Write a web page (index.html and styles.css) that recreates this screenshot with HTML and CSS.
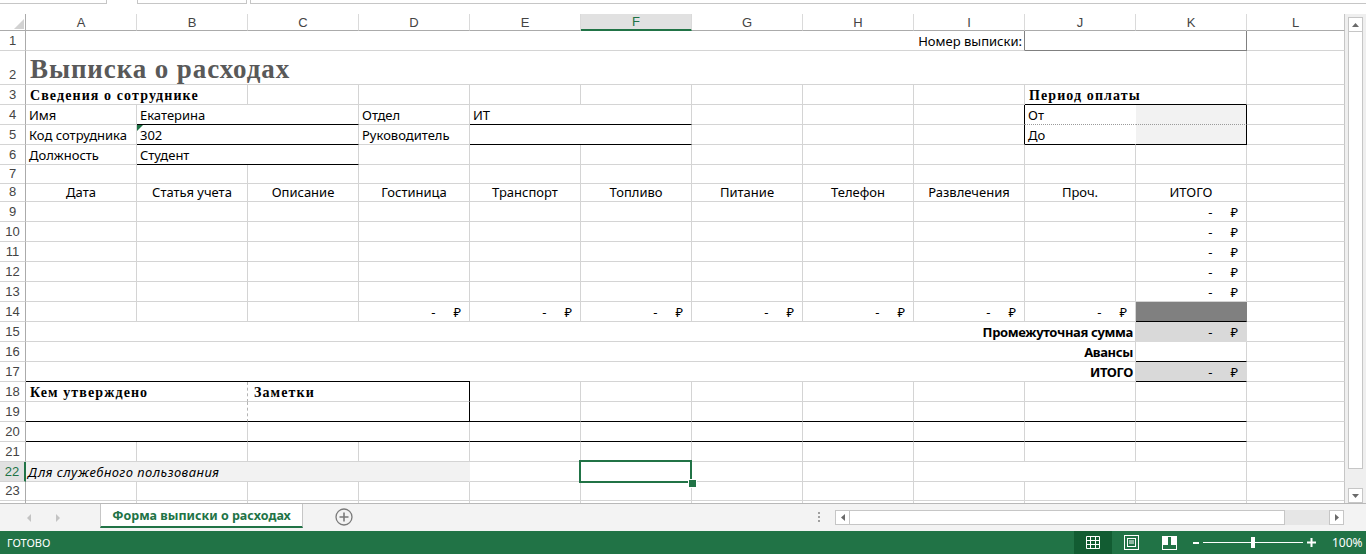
FILE: index.html
```html
<!DOCTYPE html>
<html lang="ru">
<head>
<meta charset="utf-8">
<title>Выписка о расходах</title>
<link rel="stylesheet" href="styles.css">
</head>
<body>
<div class="app">
  <div class="fbar"><div class="fb fb1"></div><div class="fb fb2"></div><div class="fb fb3"></div></div>
  <div class="main">
    <div class="sheet">
      <div class="hrow">
        <div class="corner"><svg width="10" height="10" viewBox="0 0 10 10"><path d="M10 0V10H0Z" fill="#d2d2d2"/></svg></div>
        <div class="ch">A</div><div class="ch">B</div><div class="ch">C</div><div class="ch">D</div><div class="ch">E</div><div class="ch act">F</div><div class="ch">G</div><div class="ch">H</div><div class="ch">I</div><div class="ch">J</div><div class="ch">K</div><div class="ch l">L</div>
      </div>

      <div class="row">
        <div class="rh">1</div>
        <div class="c s9 rt bxr">Номер выписки:</div>
        <div class="c s2 bxr bxb"></div>
        <div class="c l"></div>
      </div>

      <div class="row h34">
        <div class="rh">2</div>
        <div class="c s11 title">Выписка о расходах</div>
        <div class="c l"></div>
      </div>

      <div class="row">
        <div class="rh">3</div>
        <div class="c s2 hd">Сведения о сотруднике</div>
        <div class="c"></div><div class="c"></div><div class="c"></div><div class="c"></div><div class="c"></div><div class="c"></div><div class="c"></div>
        <div class="c s2 hd bb">Период оплаты</div>
        <div class="c l"></div>
      </div>

      <div class="row">
        <div class="rh">4</div>
        <div class="c">Имя</div>
        <div class="c s2 bb">Екатерина</div>
        <div class="c">Отдел</div>
        <div class="c s2 bb">ИТ</div>
        <div class="c"></div><div class="c"></div>
        <div class="c br"></div>
        <div class="c bbdot nbr">От</div>
        <div class="c f2 bbdot br"></div>
        <div class="c l"></div>
      </div>

      <div class="row">
        <div class="rh">5</div>
        <div class="c">Код сотрудника</div>
        <div class="c s2 bb pr"><span class="err"></span>302</div>
        <div class="c">Руководитель</div>
        <div class="c s2 bb"></div>
        <div class="c"></div><div class="c"></div>
        <div class="c br"></div>
        <div class="c bb nbr">До</div>
        <div class="c f2 bb br"></div>
        <div class="c l"></div>
      </div>

      <div class="row">
        <div class="rh">6</div>
        <div class="c">Должность</div>
        <div class="c s2 bb">Студент</div>
        <div class="c"></div><div class="c"></div><div class="c"></div><div class="c"></div><div class="c"></div><div class="c"></div><div class="c"></div><div class="c"></div>
        <div class="c l"></div>
      </div>

      <div class="row h17">
        <div class="rh">7</div>
        <div class="c"></div><div class="c"></div><div class="c"></div><div class="c"></div><div class="c"></div><div class="c"></div><div class="c"></div><div class="c"></div><div class="c"></div><div class="c"></div><div class="c"></div>
        <div class="c l"></div>
      </div>

      <div class="row">
        <div class="rh">8</div>
        <div class="c ctr">Дата</div>
        <div class="c ctr">Статья учета</div>
        <div class="c ctr">Описание</div>
        <div class="c ctr">Гостиница</div>
        <div class="c ctr">Транспорт</div>
        <div class="c ctr">Топливо</div>
        <div class="c ctr">Питание</div>
        <div class="c ctr">Телефон</div>
        <div class="c ctr">Развлечения</div>
        <div class="c ctr">Проч.</div>
        <div class="c ctr">ИТОГО</div>
        <div class="c l"></div>
      </div>

      <div class="row">
        <div class="rh">9</div>
        <div class="c"></div><div class="c"></div><div class="c"></div><div class="c"></div><div class="c"></div><div class="c"></div><div class="c"></div><div class="c"></div><div class="c"></div><div class="c"></div>
        <div class="c acc"><span>-</span><span>₽</span></div>
        <div class="c l"></div>
      </div>
      <div class="row">
        <div class="rh">10</div>
        <div class="c"></div><div class="c"></div><div class="c"></div><div class="c"></div><div class="c"></div><div class="c"></div><div class="c"></div><div class="c"></div><div class="c"></div><div class="c"></div>
        <div class="c acc"><span>-</span><span>₽</span></div>
        <div class="c l"></div>
      </div>
      <div class="row">
        <div class="rh">11</div>
        <div class="c"></div><div class="c"></div><div class="c"></div><div class="c"></div><div class="c"></div><div class="c"></div><div class="c"></div><div class="c"></div><div class="c"></div><div class="c"></div>
        <div class="c acc"><span>-</span><span>₽</span></div>
        <div class="c l"></div>
      </div>
      <div class="row">
        <div class="rh">12</div>
        <div class="c"></div><div class="c"></div><div class="c"></div><div class="c"></div><div class="c"></div><div class="c"></div><div class="c"></div><div class="c"></div><div class="c"></div><div class="c"></div>
        <div class="c acc"><span>-</span><span>₽</span></div>
        <div class="c l"></div>
      </div>
      <div class="row">
        <div class="rh">13</div>
        <div class="c"></div><div class="c"></div><div class="c"></div><div class="c"></div><div class="c"></div><div class="c"></div><div class="c"></div><div class="c"></div><div class="c"></div><div class="c"></div>
        <div class="c acc"><span>-</span><span>₽</span></div>
        <div class="c l"></div>
      </div>

      <div class="row">
        <div class="rh">14</div>
        <div class="c"></div><div class="c"></div><div class="c"></div>
        <div class="c acc"><span>-</span><span>₽</span></div>
        <div class="c acc"><span>-</span><span>₽</span></div>
        <div class="c acc"><span>-</span><span>₽</span></div>
        <div class="c acc"><span>-</span><span>₽</span></div>
        <div class="c acc"><span>-</span><span>₽</span></div>
        <div class="c acc"><span>-</span><span>₽</span></div>
        <div class="c acc"><span>-</span><span>₽</span></div>
        <div class="c f80 bb"></div>
        <div class="c l"></div>
      </div>

      <div class="row">
        <div class="rh">15</div>
        <div class="c s10 rt b">Промежуточная сумма</div>
        <div class="c acc fd9"><span>-</span><span>₽</span></div>
        <div class="c l"></div>
      </div>
      <div class="row">
        <div class="rh">16</div>
        <div class="c s10 rt b">Авансы</div>
        <div class="c bb"></div>
        <div class="c l"></div>
      </div>
      <div class="row">
        <div class="rh">17</div>
        <div class="c s10 rt b">ИТОГО</div>
        <div class="c acc fd9 bb"><span>-</span><span>₽</span></div>
        <div class="c l"></div>
      </div>

      <div class="row">
        <div class="rh">18</div>
        <div class="c s2 hd brdash topline">Кем утверждено</div>
        <div class="c s2 hd br topline pl5">Заметки</div>
        <div class="c"></div><div class="c"></div><div class="c"></div><div class="c"></div><div class="c"></div><div class="c"></div><div class="c"></div>
        <div class="c l"></div>
      </div>
      <div class="row">
        <div class="rh">19</div>
        <div class="c s2 brdash bb"></div>
        <div class="c s2 br bb"></div>
        <div class="c bb"></div><div class="c bb"></div><div class="c bb"></div><div class="c bb"></div><div class="c bb"></div><div class="c bb"></div><div class="c bb"></div>
        <div class="c l"></div>
      </div>
      <div class="row">
        <div class="rh">20</div>
        <div class="c s2 bb"></div>
        <div class="c s2 bb"></div>
        <div class="c bb"></div><div class="c bb"></div><div class="c bb"></div><div class="c bb"></div><div class="c bb"></div><div class="c bb"></div><div class="c bb"></div>
        <div class="c l"></div>
      </div>
      <div class="row">
        <div class="rh">21</div>
        <div class="c"></div><div class="c"></div><div class="c"></div><div class="c"></div><div class="c"></div><div class="c"></div><div class="c"></div><div class="c"></div><div class="c"></div><div class="c"></div><div class="c"></div>
        <div class="c l"></div>
      </div>
      <div class="row">
        <div class="rh act">22</div>
        <div class="c s4 i f2">Для служебного пользования</div>
        <div class="c"></div>
        <div class="c pr"><span class="sel"></span></div>
        <div class="c"></div><div class="c"></div>
        <div class="c s3"></div>
        <div class="c l"></div>
      </div>
      <div class="row h17">
        <div class="rh">23</div>
        <div class="c"></div><div class="c"></div><div class="c"></div><div class="c"></div><div class="c"></div><div class="c"></div><div class="c"></div><div class="c"></div><div class="c"></div><div class="c"></div><div class="c"></div>
        <div class="c l"></div>
      </div>
      <div class="row">
        <div class="rh">24</div>
        <div class="c"></div><div class="c"></div><div class="c"></div><div class="c"></div><div class="c"></div><div class="c"></div><div class="c"></div><div class="c"></div><div class="c"></div><div class="c"></div><div class="c"></div>
        <div class="c l"></div>
      </div>
    </div>

    <div class="vscroll">
      <div class="vbtn"><svg width="7" height="4" viewBox="0 0 7 4"><path d="M0 4H7L3.5 0Z" fill="#6a6a6a"/></svg></div>
      <div class="vthumb"></div>
      <div class="vtrack"></div>
      <div class="vbtn"><svg width="7" height="4" viewBox="0 0 7 4"><path d="M0 0H7L3.5 4Z" fill="#6a6a6a"/></svg></div>
    </div>
  </div>

  <div class="tabs">
    <div class="nav">
      <svg width="5" height="8" viewBox="0 0 5 8"><path d="M4 0V8L0 4Z" fill="#c3c3c3"/></svg>
      <svg width="5" height="8" viewBox="0 0 5 8"><path d="M1 0V8L5 4Z" fill="#c3c3c3"/></svg>
    </div>
    <div class="tab">Форма выписки о расходах</div>
    <svg class="add" width="18" height="18" viewBox="0 0 18 18"><circle cx="9" cy="9" r="8" fill="none" stroke="#7a7a7a" stroke-width="1.3"/><path d="M9 4.5V13.5M4.5 9H13.5" stroke="#7a7a7a" stroke-width="1.6"/></svg>
    <div class="dots"><span></span><span></span><span></span></div>
    <div class="hscroll">
      <div class="hbtn"><svg width="4" height="7" viewBox="0 0 4 7"><path d="M4 0V7L0 3.5Z" fill="#6a6a6a"/></svg></div>
      <div class="hthumb"></div>
      <div class="htrack"></div>
      <div class="hbtn"><svg width="4" height="7" viewBox="0 0 4 7"><path d="M0 0V7L4 3.5Z" fill="#6a6a6a"/></svg></div>
    </div>
  </div>

  <div class="status">
    <div class="ready">ГОТОВО</div>
    <div class="views">
      <div class="vb on"><svg width="14" height="13" viewBox="0 0 14 13"><path d="M0.5 0.5H13.5V12.5H0.5Z M0.5 4.5H13.5 M0.5 8.5H13.5 M4.5 0.5V12.5 M9.5 0.5V12.5" stroke="#fff" fill="none"/></svg></div>
      <div class="vb"><svg width="15" height="15" viewBox="0 0 15 15"><rect x="0.5" y="0.5" width="14" height="14" stroke="#fff" fill="none"/><rect x="3.5" y="3.5" width="8" height="8" stroke="#fff" fill="none"/><path d="M5 6H10M5 8H10" stroke="#fff"/></svg></div>
      <div class="vb"><svg width="15" height="14" viewBox="0 0 15 14"><rect x="0.5" y="0.5" width="14" height="13" stroke="#fff" fill="none"/><rect x="1" y="1" width="5" height="8" fill="#fff"/><rect x="9" y="1" width="5" height="8" fill="#fff"/></svg></div>
    </div>
    <div class="minus"></div>
    <div class="zline"><span class="zseg"></span><span class="zthumb"></span><span class="zseg"></span></div>
    <svg class="plus" width="9" height="9" viewBox="0 0 9 9"><path d="M4.5 0V9M0 4.5H9" stroke="#fff" stroke-width="2"/></svg>
    <div class="pct">100%</div>
  </div>
</div>
</body>
</html>
```
FILE: styles.css
```css
* { box-sizing: border-box; margin: 0; padding: 0; }
html, body { width: 1366px; height: 554px; overflow: hidden; background: #fff; }
body { font-family: "Noto Sans", "Liberation Sans", sans-serif; font-size: 13px; color: #000; }

.app { display: flex; flex-direction: column; width: 1366px; height: 554px; }

/* formula bar remnants */
.fbar { height: 14px; flex: none; display: flex; align-items: flex-start; }
.fb { height: 4px; border: 1px solid #c6c6c6; border-top: 0; background: #fff; }
.fb1 { width: 107px; border-left: 0; }
.fb2 { width: 110px; margin-left: 30px; }
.fb3 { flex: 1; margin-left: 3px; border-right: 0; }

.main { display: flex; height: 489px; flex: none; }
.sheet { width: 1345px; height: 489px; overflow: hidden; flex: none; }

.hrow, .row { display: grid; grid-template-columns: 26px repeat(11, 111px) 98px; }
.hrow { height: 17px; }
.row { height: 20px; }
.row.h17 { height: 17px; }
.row.h34 { height: 34px; }

.corner { border-right: 1px solid #ababab; border-bottom: 1px solid #ababab; display: flex; justify-content: flex-end; align-items: flex-end; padding: 0 1px 1px 0; }
.ch { border-right: 1px solid #dadada; border-bottom: 1px solid #ababab; font-family: "Liberation Sans", Arial, sans-serif; font-size: 13px; color: #444; display: flex; justify-content: center; align-items: flex-end; line-height: 15px; }
.ch.act { background: #e1e1e1; color: #217346; border-bottom: 2px solid #217346; line-height: 14px; }
.ch.l { border-right-color: #c6c6c6; }

.rh { border-right: 1px solid #ababab; border-bottom: 1px solid #d4d4d4; font-family: "Liberation Sans", Arial, sans-serif; font-size: 13px; color: #444; display: flex; justify-content: center; align-items: flex-end; line-height: 18px; }
.rh.act { background: #e1e1e1; color: #217346; border-right: 2px solid #217346; }

.c { border-right: 1px solid #d4d4d4; border-bottom: 1px solid #d4d4d4; display: flex; align-items: flex-end; padding: 0 3px; white-space: nowrap; line-height: 17px; min-width: 0; }
.c.l { border-right-color: #c6c6c6; }

.s2 { grid-column: span 2; }
.s3 { grid-column: span 3; }
.s4 { grid-column: span 4; }
.s9 { grid-column: span 9; }
.s10 { grid-column: span 10; }
.s11 { grid-column: span 11; }

.title { font-family: "Liberation Serif", serif; font-weight: 700; font-size: 27px; letter-spacing: 0.9px; color: #595959; line-height: 30px; padding-left: 4px; }
.hd { font-family: "Liberation Serif", serif; font-weight: 700; font-size: 14px; letter-spacing: 1.1px; padding-left: 4px; }
.pl5 { padding-left: 6px; }
.b { font-weight: 700; letter-spacing: -0.35px; }
.i { font-style: italic; letter-spacing: 0.45px; padding-left: 2px; }
.ctr { justify-content: center; }
.rt { justify-content: flex-end; padding-right: 2px; }
.acc { justify-content: flex-end; padding-right: 8px; gap: 18px; }

/* fills */
.f2 { background: #f2f2f2; border-right-color: #f2f2f2; }
.fd9 { background: #d9d9d9; border-right-color: #d9d9d9; border-bottom-color: #d9d9d9; }
.f80 { background: #808080; border-right-color: #808080; }

/* borders */
.bxr { border-right-color: #808080; }
.bxb { border-bottom-color: #808080; }
.bbdot { border-bottom-style: dotted; border-bottom-color: #9a9a9a; }
.nbr { border-right-color: transparent; }
.brdash { border-right-style: dashed; border-right-color: #b4b4b4; }
.bb { border-bottom-color: #000; border-bottom-style: solid; }
.br { border-right-color: #000; border-right-style: solid; }
.topline { box-shadow: 0 -1px 0 #000; }

.pr { position: relative; }
.err { position: absolute; left: 0; top: 0; width: 0; height: 0; border-top: 6px solid #1e7145; border-right: 6px solid transparent; }
.sel { position: absolute; left: -2px; top: -2px; width: 113px; height: 23px; border: 2px solid #217346; z-index: 2; }
.sel::after { content: ""; position: absolute; left: 107px; top: 17px; width: 7px; height: 7px; background: #217346; border: 1px solid #fff; }

/* vertical scrollbar */
.vscroll { width: 21px; height: 489px; flex: none; background: #efefef; display: flex; flex-direction: column; padding: 3px 3px 0 3px; }
.vbtn { height: 15px; flex: none; background: #fff; border: 1px solid #c6c6c6; display: flex; align-items: center; justify-content: center; }
.vthumb { height: 437px; flex: none; background: #fff; border: 1px solid #c6c6c6; border-top: 0; }
.vtrack { flex: 1; }

/* sheet tabs */
.tabs { height: 28px; flex: none; display: flex; align-items: flex-start; background: #f3f3f3; border-top: 1px solid #b8b8b8; }
.nav { width: 100px; height: 27px; flex: none; display: flex; align-items: center; padding-left: 27px; gap: 23px; }
.tab { width: 203px; height: 24px; flex: none; background: #fff; border-left: 1px solid #c6c6c6; border-right: 1px solid #c6c6c6; border-bottom: 2px solid #217346; color: #217346; font-weight: 700; font-size: 12.5px; display: flex; align-items: center; justify-content: center; }
.add { margin: 4px 0 0 32px; flex: none; }
.dots { margin: 8px 15px 0 auto; width: 2px; display: flex; flex-direction: column; gap: 2px; }
.dots span { display: block; width: 2px; height: 2px; background: #a0a0a0; }
.hscroll { width: 509px; height: 15px; margin: 6px 22px 0 0; display: flex; flex: none; }
.hbtn { width: 15px; height: 15px; flex: none; background: #fff; border: 1px solid #c6c6c6; display: flex; align-items: center; justify-content: center; }
.hthumb { width: 435px; flex: none; background: #fff; border: 1px solid #c6c6c6; border-left: 0; }
.htrack { flex: 1; background: #e6e6e6; }

/* status bar */
.status { height: 23px; flex: none; background: #217346; color: #fff; display: flex; align-items: center; font-size: 11px; }
.ready { padding-left: 7px; }
.views { margin-left: auto; display: flex; height: 23px; }
.vb { width: 38px; height: 23px; display: flex; align-items: center; justify-content: center; }
.vb.on { background: #125c32; }
.minus { width: 6px; height: 2px; background: #fff; margin-left: 5px; }
.zline { width: 100px; margin-left: 4px; display: flex; align-items: center; }
.zseg { flex: 1; height: 1px; background: #fff; }
.zthumb { width: 4px; height: 11px; background: #fff; }
.plus { margin-left: 4px; flex: none; }
.pct { width: 34px; margin-left: 16px; font-size: 12px; }
```
